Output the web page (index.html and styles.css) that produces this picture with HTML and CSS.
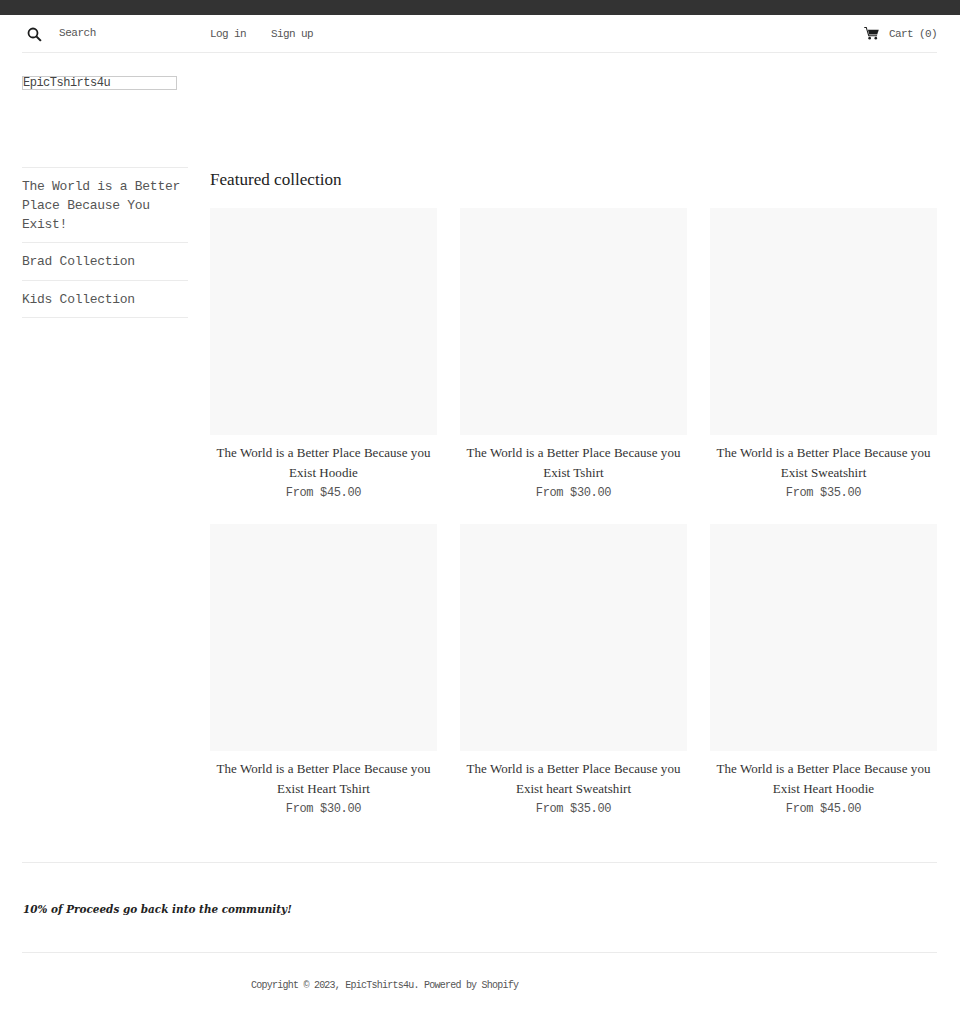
FILE: index.html
```html
<!DOCTYPE html>
<html lang="en">
<head>
<meta charset="utf-8">
<title>EpicTshirts4u</title>
<link rel="stylesheet" href="styles.css">
</head>
<body>
<div class="topbar"></div>
<div class="page">
  <header class="header">
    <div class="search">
      <svg class="search-icon" viewBox="0 0 16 16" width="15" height="15"><circle cx="6.4" cy="6.4" r="4.8" fill="none" stroke="#1c1d1d" stroke-width="1.9"/><path d="M10 10 L14.8 14.8" stroke="#1c1d1d" stroke-width="2.2" fill="none"/></svg>
      <span class="search-label">Search</span>
    </div>
    <nav class="account">
      <a class="nav-link">Log in</a>
      <a class="nav-link">Sign up</a>
    </nav>
    <div class="cart">
      <svg class="cart-icon" viewBox="0 0 16 14" width="15" height="13"><path d="M.2 .6 H2.4 L5 9.4 H14" fill="none" stroke="#1c1d1d" stroke-width="1.1"/><path d="M4.2 3 H15.8 L14.2 8 H5.4 Z" fill="#1c1d1d"/><circle cx="6" cy="12" r="1.4" fill="#1c1d1d"/><circle cx="12.6" cy="12" r="1.4" fill="#1c1d1d"/></svg>
      <span class="nav-link">Cart (0)</span>
    </div>
  </header>
  <div class="logo">EpicTshirts4u</div>
  <div class="layout">
    <aside class="sidebar">
      <a class="side-link">The World is a Better Place Because You Exist!</a>
      <a class="side-link">Brad Collection</a>
      <a class="side-link">Kids Collection</a>
    </aside>
    <main class="main">
      <h2 class="heading">Featured collection</h2>
      <div class="grid">
        <article class="product"><div class="thumb"></div><h3 class="title">The World is a Better Place Because you Exist Hoodie</h3><p class="price">From $45.00</p></article>
        <article class="product"><div class="thumb"></div><h3 class="title">The World is a Better Place Because you Exist Tshirt</h3><p class="price">From $30.00</p></article>
        <article class="product"><div class="thumb"></div><h3 class="title">The World is a Better Place Because you Exist Sweatshirt</h3><p class="price">From $35.00</p></article>
        <article class="product"><div class="thumb"></div><h3 class="title">The World is a Better Place Because you Exist Heart Tshirt</h3><p class="price">From $30.00</p></article>
        <article class="product"><div class="thumb"></div><h3 class="title">The World is a Better Place Because you Exist heart Sweatshirt</h3><p class="price">From $35.00</p></article>
        <article class="product"><div class="thumb"></div><h3 class="title">The World is a Better Place Because you Exist Heart Hoodie</h3><p class="price">From $45.00</p></article>
      </div>
    </main>
  </div>
  <footer class="footer">
    <p class="promo">10% of Proceeds go back into the community!</p>
    <p class="copyright">Copyright © 2023, EpicTshirts4u. Powered by Shopify</p>
  </footer>
</div>
</body>
</html>
```
FILE: styles.css
```css
* { box-sizing: border-box; }
html, body { margin: 0; padding: 0; background: #fff; }
body { font-family: "Liberation Mono", monospace; color: #333; height: 1016px; overflow: hidden; }
.topbar { height: 15px; background: #333; }
.page { padding: 0 23px 0 22px; }
.header { display: flex; align-items: center; height: 38px; border-bottom: 1px solid #ebebeb; }
.search { display: flex; align-items: center; width: 188px; }
.search-icon { margin-left: 5px; margin-top: 2px; }
.search-label { margin-left: 17px; font-size: 11px; letter-spacing: -.45px; margin-top: -2px; color: #555; }
.account { display: flex; gap: 25px; }
.nav-link { font-size: 11px; letter-spacing: -.6px; color: #555; white-space: nowrap; }
.cart { margin-left: auto; display: flex; align-items: center; gap: 10px; }
.logo { margin-top: 23px; width: 155px; height: 14px; border: 1px solid #ccc; font-size: 12px; line-height: 12px; letter-spacing: -.5px; color: #444; white-space: nowrap; }
.layout { display: flex; gap: 22px; margin-top: 77px; }
.sidebar { width: 166px; flex: none; border-top: 1px solid #ebebeb; }
.side-link { display: block; padding: 10px 0 7.75px; border-bottom: 1px solid #ebebeb; font-size: 13px; line-height: 18.75px; letter-spacing: -.28px; color: #555; }
.main { flex: 1; min-width: 0; }
.heading { margin: 0; padding-top: 1px; font-family: "Liberation Serif", serif; font-weight: 400; font-size: 17.1px; line-height: 23px; color: #222; }
.grid { display: grid; grid-template-columns: repeat(3, 227px); column-gap: 23px; row-gap: 23px; margin-top: 17px; }
.thumb { height: 227px; background: #f8f8f8; }
.title { margin: 8px 0 0; font-family: "Liberation Serif", serif; font-weight: 400; font-size: 13px; letter-spacing: .05px; line-height: 20px; text-align: center; color: #333; }
.price { margin: 0; padding-top: 2px; font-size: 12px; letter-spacing: -.35px; line-height: 16px; text-align: center; color: #555; }
.footer { margin-top: 45px; }
.promo { margin: 0; height: 91px; border-top: 1px solid #ebebeb; border-bottom: 1px solid #ebebeb; padding: 38px 0 0 1px; font-family: "DejaVu Serif", serif; font-weight: 700; font-style: italic; font-size: 10.45px; line-height: 16px; color: #222; }
.copyright { margin: 26px 0 0 229px; font-size: 10px; letter-spacing: -.76px; line-height: 14px; color: #555; white-space: nowrap; }
```
